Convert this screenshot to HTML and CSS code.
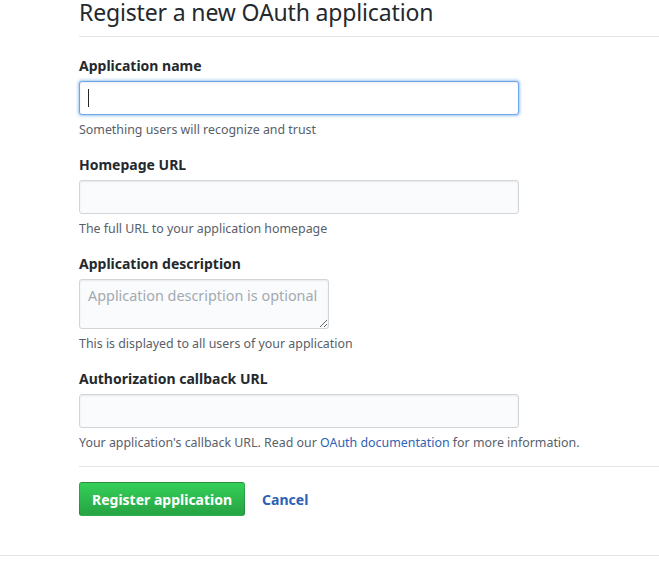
FILE: index.html
```html
<!DOCTYPE html>
<html lang="en">
<head>
<meta charset="utf-8">
<title>Register a new OAuth application</title>
<link rel="stylesheet" href="styles.css">
</head>
<body>
<div class="page">
  <div class="content">
    <h2 class="subhead">Register a new OAuth application</h2>
    <form class="oauth-form">
      <div class="form-group">
        <label class="form-label" for="app-name">Application name</label>
        <div class="input-wrap">
          <input class="form-control focused" id="app-name" type="text">
          <span class="caret"></span>
        </div>
        <p class="note">Something users will recognize and trust</p>
      </div>
      <div class="form-group">
        <label class="form-label" for="app-url">Homepage URL</label>
        <input class="form-control" id="app-url" type="text">
        <p class="note">The full URL to your application homepage</p>
      </div>
      <div class="form-group">
        <label class="form-label" for="app-desc">Application description</label>
        <textarea class="form-control textarea" id="app-desc" placeholder="Application description is optional"></textarea>
        <p class="note">This is displayed to all users of your application</p>
      </div>
      <div class="form-group">
        <label class="form-label" for="app-cb">Authorization callback URL</label>
        <input class="form-control" id="app-cb" type="text">
        <p class="note">Your application's callback URL. Read our <a class="link" href="#">OAuth documentation</a> for more information.</p>
      </div>
      <div class="actions">
        <button class="btn-primary" type="button">Register application</button>
        <a class="cancel" href="#">Cancel</a>
      </div>
    </form>
  </div>
  <div class="footer-line"></div>
</div>
</body>
</html>
```

FILE: styles.css
```css
html, body {
  margin: 0;
  padding: 0;
  background: #fff;
  overflow: hidden;
}
body {
  font-family: "Noto Sans", "Open Sans", "Liberation Sans", sans-serif;
  color: #24292e;
  font-size: 14px;
}
.page {
  width: 659px;
}
.content {
  padding-left: 79px;
}
.subhead {
  margin: -3px 0 0 0;
  padding-bottom: 9px;
  font-size: 23px;
  letter-spacing: -0.15px;
  line-height: 30px;
  font-weight: 400;
  color: #24292e;
  border-bottom: 1px solid #e1e4e8;
}
.oauth-form {
  padding-top: 18px;
}
.form-group {
  margin-bottom: 15px;
}
.form-label {
  display: block;
  font-weight: 700;
  font-size: 14px;
  line-height: 21px;
  margin-bottom: 5px;
}
.input-wrap {
  position: relative;
  width: 440px;
}
.form-control {
  display: block;
  box-sizing: border-box;
  width: 440px;
  height: 34px;
  margin: 0;
  padding: 6px 8px;
  font-family: inherit;
  font-size: 14px;
  color: #24292e;
  background: #fafbfc;
  border: 1px solid #d1d5da;
  border-radius: 3px;
  box-shadow: inset 0 1px 2px rgba(27, 31, 35, 0.075);
  outline: none;
}
.form-control.focused {
  background: #fff;
  border-color: #6ea6e8;
  box-shadow: inset 0 1px 2px rgba(27, 31, 35, 0.075), 0 0 3px 1px rgba(81, 150, 230, 0.55);
}
.caret {
  position: absolute;
  left: 9px;
  top: 8px;
  width: 1px;
  height: 18px;
  background: #24292e;
}
.textarea {
  width: 250px;
  height: 50px;
  padding: 6px 2px 6px 8px;
  font-size: 14.4px;
  line-height: 20px;
  resize: vertical;
  overflow: hidden;
}
.textarea::placeholder {
  color: #a3aab1;
}
.note {
  margin: 6px 0 0 0;
  font-size: 12.4px;
  line-height: 18px;
  color: #586069;
}
.link {
  color: #2e62b5;
  text-decoration: none;
}
.actions {
  display: flex;
  align-items: center;
  gap: 17px;
  border-top: 1px solid #e1e4e8;
  margin-top: -1px;
  padding-top: 15px;
  padding-bottom: 39px;
}
.btn-primary {
  box-sizing: border-box;
  height: 34px;
  padding: 0 12px;
  font-family: inherit;
  font-size: 14px;
  font-weight: 700;
  color: #fff;
  background-image: linear-gradient(-180deg, #34d058 0%, #28a745 90%);
  border: 1px solid rgba(27, 31, 35, 0.2);
  border-radius: 3px;
  cursor: pointer;
}
.cancel {
  font-weight: 700;
  font-size: 14px;
  color: #2e62b5;
  text-decoration: none;
}
.footer-line {
  border-top: 1px solid #e1e4e8;
}
```
